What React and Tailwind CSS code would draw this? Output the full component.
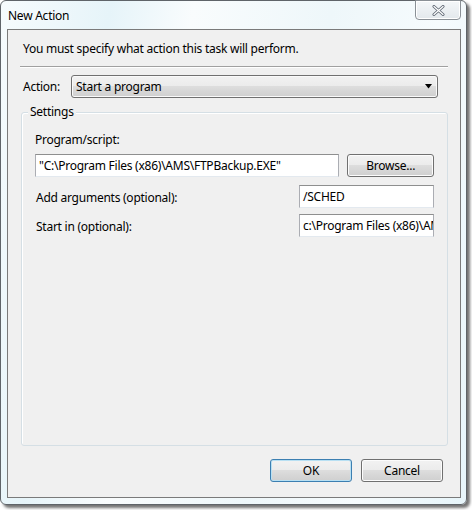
import React from "react";

const font = {
  fontFamily: '"Noto Sans", "Open Sans", sans-serif',
  letterSpacing: "-0.25px",
};

function WinButton({ children, primary, className = "" }) {
  return (
    <div
      className={
        "flex items-center justify-center rounded-[3px] border text-[12px] text-black " +
        (primary
          ? "border-[#3c7fb1] shadow-[inset_0_0_0_1px_#b8e0f3] "
          : "border-[#707070] shadow-[inset_0_0_0_1px_#fcfcfc] ") +
        "bg-[linear-gradient(#f2f2f2_0%,#ebebeb_50%,#dddddd_50%,#cfcfcf_100%)] " +
        className
      }
    >
      {children}
    </div>
  );
}

function TextBox({ value, className = "" }) {
  return (
    <div
      className={
        "flex h-[23px] items-center overflow-hidden whitespace-nowrap border border-[#abadb3] border-t-[#8e8f8f] border-b-[#e3e9ef] bg-white pl-[3px] text-[12px] text-black " +
        className
      }
    >
      {value}
    </div>
  );
}

export default function App() {
  return (
    <div className="h-[510px] w-[472px] bg-white" style={font}>
      <div className="relative h-[505px] w-[467px] rounded-[6px] border border-[#5f6469] bg-[linear-gradient(100deg,#f6fbfd_0%,#e6f4f9_20%,#f9fcfd_35%,#eef7fa_60%,#f6fbfd_80%,#e7f5fa_100%)] shadow-[3px_3px_3px_rgba(0,0,0,0.55)]">
        {/* title bar */}
        <div className="flex h-[28px] items-start justify-between">
          <div className="pl-[7px] pt-[6px] text-[12px] text-black [text-shadow:0_0_6px_#ffffff]">
            New Action
          </div>
          <div className="mr-[5px] mt-[-1px] flex h-[20px] w-[46px] items-center justify-center rounded-b-[4px] border border-[#8a9096] bg-[linear-gradient(#f4f7f9,#e3e8ec)] shadow-[inset_0_0_0_1px_#ffffff]">
            <svg width="13" height="11" viewBox="0 0 13 11">
              <path
                d="M2 1.5 L11 9.5 M11 1.5 L2 9.5"
                stroke="#5b6470"
                strokeWidth="3"
                strokeLinecap="round"
              />
              <path
                d="M2 1.5 L11 9.5 M11 1.5 L2 9.5"
                stroke="#ffffff"
                strokeWidth="1.3"
                strokeLinecap="round"
              />
            </svg>
          </div>
        </div>

        {/* client area */}
        <div className="ml-[6px] flex h-[469px] w-[454px] flex-col border border-[#7a7a7a] bg-[#f0f0f0] text-[12px] text-black">
          <div className="pl-[15px] pt-[11px] leading-[16px]">
            You must specify what action this task will perform.
          </div>
          <div className="ml-[12px] mt-[9px] h-[2px] w-[428px] border-t border-b border-t-[#a0a0a0] border-b-white" />

          <div className="mt-[7px] flex items-center pl-[15px]">
            <span className="w-[48px]">Action:</span>
            <div className="relative flex h-[23px] w-[367px] items-center rounded-[3px] border border-[#707070] bg-[linear-gradient(#f2f2f2_0%,#ebebeb_50%,#dddddd_50%,#cfcfcf_100%)] pl-[4px] shadow-[inset_0_0_0_1px_#fafafa]">
              Start a program
              <svg
                className="absolute right-[4px] top-[8px]"
                width="8"
                height="5"
                viewBox="0 0 8 5"
              >
                <path d="M0 0 H7 L3.5 4.5 Z" fill="#000" />
              </svg>
            </div>
          </div>

          {/* settings group */}
          <div className="relative ml-[13px] mt-[14px] h-[334px] w-[427px] rounded-[3px] border border-[#d5dfe5] shadow-[inset_1px_1px_0_#ffffff]">
            <div className="absolute left-[6px] top-[-9px] bg-[#f0f0f0] px-[2px] leading-[16px]">
              Settings
            </div>
            <div className="flex flex-col pl-[13px] pr-[13px]">
              <div className="mt-[19px] leading-[16px]">Program/script:</div>
              <div className="mt-[6px] flex items-center">
                <TextBox
                  value={'"C:\\Program Files (x86)\\AMS\\FTPBackup.EXE"'}
                  className="w-[306px]"
                />
                <WinButton className="ml-[8px] h-[23px] w-[87px]">
                  Browse...
                </WinButton>
              </div>
              <div className="mt-[8px] flex items-center justify-between">
                <span className="pl-[1px] pt-[2px]">Add arguments (optional):</span>
                <TextBox value="/SCHED" className="w-[135px]" />
              </div>
              <div className="mt-[6px] flex items-center justify-between">
                <span className="pl-[1px] pt-[2px]">Start in (optional):</span>
                <TextBox
                  value={"c:\\Program Files (x86)\\AMS\\FTPBackup"}
                  className="w-[135px]"
                />
              </div>
            </div>
          </div>

          <div className="mt-[13px] flex justify-end gap-[9px] pr-[17px]">
            <WinButton primary className="h-[23px] w-[82px]">
              OK
            </WinButton>
            <WinButton className="h-[23px] w-[82px]">Cancel</WinButton>
          </div>
        </div>
      </div>
    </div>
  );
}
